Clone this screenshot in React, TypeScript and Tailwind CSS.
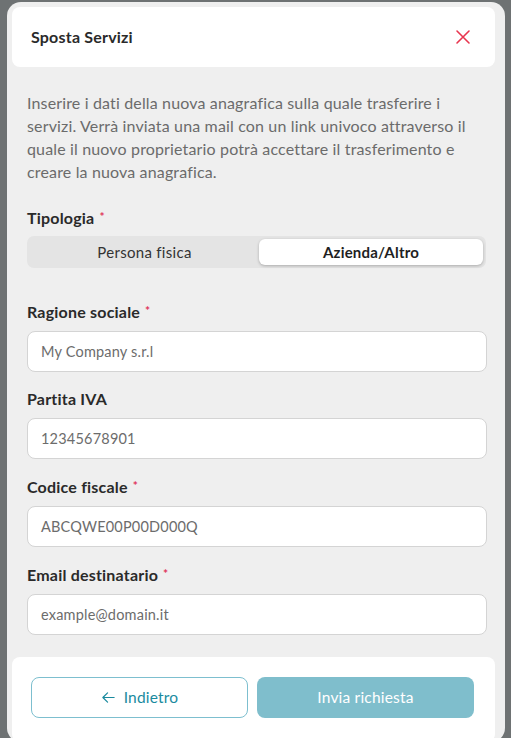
import React from "react";

const font = { fontFamily: "Lato, 'Noto Sans', sans-serif" };

function Label({ text, req }: { text: string; req?: boolean }) {
  return (
    <div className="h-[20px] flex items-center text-[16px] font-bold tracking-[0.2px] text-[#2a2a2a] leading-[20px]">
      {text}
      {req && <span className="text-[#e0335a] ml-[5px] text-[12px] -mt-[2px]">*</span>}
    </div>
  );
}

function Input({ value }: { value: string }) {
  return (
    <div className="mt-[9px] h-[41px] w-[460px] rounded-[8px] border border-[#d4d4d4] bg-white flex items-center pl-[13px] text-[14.5px] tracking-[0.2px] text-[#6c6c6c]">
      {value}
    </div>
  );
}

export default function App() {
  return (
    <div className="w-[511px] h-[738px] bg-[#6e7273] overflow-hidden" style={font}>
      <div className="ml-[7px] mt-[2px] w-[498px] h-[740px] rounded-[14px] bg-[#efefef] pl-[5px] pr-[10px] pt-[5px] flex flex-col">
        <div className="h-[60px] bg-white rounded-[8px] pl-[19px] pr-[24px] flex items-center justify-between">
          <span className="text-[16px] font-bold tracking-[0.2px] text-[#2a2a2a]">Sposta Servizi</span>
          <svg width="16" height="16" viewBox="0 0 16 16" fill="none" stroke="#e8364f" strokeWidth="1.6" strokeLinecap="round">
            <path d="M2 2 L14 14 M14 2 L2 14" />
          </svg>
        </div>
        <div className="pl-[15px] pt-[24px]">
          <p className="text-[16px] leading-[23px] tracking-[0.15px] text-[#6b6b6b] w-[470px] whitespace-nowrap">
            Inserire i dati della nuova anagrafica sulla quale trasferire i<br />
            servizi. Verrà inviata una mail con un link univoco attraverso il<br />
            quale il nuovo proprietario potrà accettare il trasferimento e<br />
            creare la nuova anagrafica.
          </p>
          <div className="mt-[25px]">
            <Label text="Tipologia" req />
          </div>
          <div className="mt-[8px] w-[459px] h-[32px] rounded-[7px] bg-[#e4e4e4] p-[3px] flex">
            <div className="flex-1 flex items-center justify-center text-[15px] tracking-[0.3px] text-[#333]">Persona fisica</div>
            <div className="w-[224px] rounded-[6px] bg-white shadow-[0_1px_3px_rgba(0,0,0,0.25)] flex items-center justify-center text-[15px] tracking-[0.2px] font-bold text-[#1f1f1f]">
              Azienda/Altro
            </div>
          </div>
          <div className="mt-[34px]">
            <Label text="Ragione sociale" req />
            <Input value="My Company s.r.l" />
          </div>
          <div className="mt-[17px]">
            <Label text="Partita IVA" />
            <Input value="12345678901" />
          </div>
          <div className="mt-[18px]">
            <Label text="Codice fiscale" req />
            <Input value="ABCQWE00P00D000Q" />
          </div>
          <div className="mt-[18px]">
            <Label text="Email destinatario" req />
            <Input value="example@domain.it" />
          </div>
        </div>
        <div className="mt-[22px] flex-1 bg-white rounded-[8px] pl-[19px] pr-[19px] pt-[20px] flex gap-[9px]">
          <div className="w-[217px] h-[41px] rounded-[8px] border border-[#7dbfcf] flex items-center justify-center gap-[8px] text-[15.5px] tracking-[0.2px] text-[#1a8a9e]">
            <svg width="15" height="15" viewBox="0 0 16 16" fill="none" stroke="#1a8a9e" strokeWidth="1.3" strokeLinecap="round" strokeLinejoin="round">
              <path d="M14 8 H2 M7 3 L2 8 L7 13" />
            </svg>
            Indietro
          </div>
          <div className="w-[217px] h-[41px] rounded-[8px] bg-[#7fbecc] flex items-center justify-center text-[15.5px] tracking-[0.2px] text-white">
            Invia richiesta
          </div>
        </div>
      </div>
    </div>
  );
}
